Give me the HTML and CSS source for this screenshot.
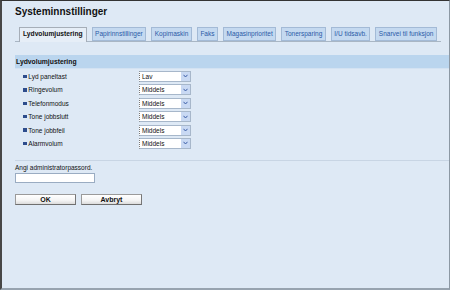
FILE: index.html
```html
<!DOCTYPE html>
<html lang="no">
<head>
<meta charset="UTF-8">
<title>Systeminnstillinger</title>
<link rel="stylesheet" href="styles.css">
</head>
<body>

<div class="page">
    <h1>Systeminnstillinger</h1>

    <div class="tabs">
        <span class="tab active">Lydvolumjustering</span>
        <span class="tab">Papirinnstillinger</span>
        <span class="tab">Kopimaskin</span>
        <span class="tab">Faks</span>
        <span class="tab">Magasinprioritet</span>
        <span class="tab">Tonersparing</span>
        <span class="tab">I/U tidsavb.</span>
        <span class="tab">Snarvei til funksjon</span>
    </div>

    <div class="section-bar">Lydvolumjustering</div>

    <div class="rows">
        <div class="row">
            <span class="label">Lyd paneltast</span>
            <span class="sel"><span class="sel-text">Lav</span><span class="sel-arrow"><svg width="5" height="4" viewBox="0 0 5 4"><path d="M0.5 0.8 L2.5 3 L4.5 0.8" fill="none" stroke="#3d5fa8" stroke-width="1"/></svg></span></span>
        </div>
        <div class="row">
            <span class="label">Ringevolum</span>
            <span class="sel"><span class="sel-text">Middels</span><span class="sel-arrow"><svg width="5" height="4" viewBox="0 0 5 4"><path d="M0.5 0.8 L2.5 3 L4.5 0.8" fill="none" stroke="#3d5fa8" stroke-width="1"/></svg></span></span>
        </div>
        <div class="row">
            <span class="label">Telefonmodus</span>
            <span class="sel"><span class="sel-text">Middels</span><span class="sel-arrow"><svg width="5" height="4" viewBox="0 0 5 4"><path d="M0.5 0.8 L2.5 3 L4.5 0.8" fill="none" stroke="#3d5fa8" stroke-width="1"/></svg></span></span>
        </div>
        <div class="row">
            <span class="label">Tone jobbslutt</span>
            <span class="sel"><span class="sel-text">Middels</span><span class="sel-arrow"><svg width="5" height="4" viewBox="0 0 5 4"><path d="M0.5 0.8 L2.5 3 L4.5 0.8" fill="none" stroke="#3d5fa8" stroke-width="1"/></svg></span></span>
        </div>
        <div class="row">
            <span class="label">Tone jobbfeil</span>
            <span class="sel"><span class="sel-text">Middels</span><span class="sel-arrow"><svg width="5" height="4" viewBox="0 0 5 4"><path d="M0.5 0.8 L2.5 3 L4.5 0.8" fill="none" stroke="#3d5fa8" stroke-width="1"/></svg></span></span>
        </div>
        <div class="row">
            <span class="label">Alarmvolum</span>
            <span class="sel"><span class="sel-text">Middels</span><span class="sel-arrow"><svg width="5" height="4" viewBox="0 0 5 4"><path d="M0.5 0.8 L2.5 3 L4.5 0.8" fill="none" stroke="#3d5fa8" stroke-width="1"/></svg></span></span>
        </div>
    </div>

    <div class="admin">
        <div class="admin-label">Angi administratorpassord.</div>
        <input type="password" class="pw">
        <div class="buttons">
            <button class="btn">OK</button>
            <button class="btn">Avbryt</button>
        </div>
    </div>
</div>

</body>
</html>
```

FILE: styles.css
```css
html, body {
    margin: 0;
    padding: 0;
}
body {
    font-family: 'Liberation Sans', Arial, sans-serif;
    width: 450px;
    height: 290px;
    box-sizing: border-box;
    overflow: hidden;
    background-color: #dee9f5;
    border-top: 1px solid #333;
    border-left: 2px solid #474747;
    border-right: 1px solid #8c98a4;
    border-bottom: 2px solid #97a3af;
    color: #111;
}
.page {
    padding-left: 13px;
}
h1 {
    margin: 4.5px 0 0;
    font-size: 10px;
    line-height: 12px;
    font-weight: bold;
    color: #111;
}
.tabs {
    display: flex;
    gap: 5px;
    margin: 9.5px 8px 0 0;
    padding-left: 4px;
    border-bottom: 1px solid #a9b6c4;
    height: 14px;
}
.tab {
    display: block;
    box-sizing: border-box;
    height: 14px;
    line-height: 12px;
    padding: 0 2.5px;
    font-size: 6.5px;
    color: #2b5aa6;
    background-color: #c4d9f0;
    border: 1px solid #a3bad6;
    white-space: nowrap;
}
.tab.active {
    height: 15px;
    padding: 0 3px;
    font-size: 6.7px;
    font-weight: bold;
    color: #111;
    background-color: #e6eef7;
    border-color: #a6aeb8;
    border-bottom: none;
}
.section-bar {
    margin-top: 13px;
    height: 13px;
    line-height: 13px;
    padding-left: 1px;
    font-size: 6.8px;
    font-weight: bold;
    background-color: #bad5ee;
    border-bottom: 1px solid #d3e2f2;
}
.rows {
    padding-top: 0.8px;
}
.row {
    display: flex;
    align-items: center;
    height: 13.4px;
}
.label {
    display: flex;
    align-items: center;
    width: 124px;
    box-sizing: border-box;
    padding-left: 8px;
    font-size: 6.5px;
}
.label::before {
    content: "";
    width: 3.5px;
    height: 3.5px;
    margin-right: 1.8px;
    background-color: #2d4c8c;
}
.sel {
    position: relative;
    display: block;
    box-sizing: border-box;
    width: 52px;
    height: 11px;
    background-color: #fff;
    border: 1px solid #a7b7ca;
    border-left: 1px dotted #777;
}
.sel-text {
    display: block;
    padding-left: 2px;
    font-size: 6.5px;
    line-height: 9px;
}
.sel-arrow {
    position: absolute;
    top: 0;
    right: 0;
    width: 9px;
    height: 9px;
    display: flex;
    align-items: center;
    justify-content: center;
    background-color: #c9d9f3;
}
.admin {
    margin-top: 9.6px;
    border-top: 1px solid #c8d5e4;
    padding-top: 3px;
}
.admin-label {
    font-size: 6.5px;
    line-height: 8px;
}
.pw {
    display: block;
    box-sizing: border-box;
    width: 80px;
    height: 10px;
    margin: 1px 0 0;
    padding: 0;
    background: #fff;
    border: 1px solid #9aacc2;
}
.buttons {
    display: flex;
    gap: 5px;
    margin-top: 11px;
}
.btn {
    box-sizing: border-box;
    width: 61px;
    height: 11px;
    padding: 0;
    font-family: 'Liberation Sans', Arial, sans-serif;
    font-size: 7px;
    font-weight: bold;
    line-height: 9px;
    color: #111;
    background: linear-gradient(#ffffff, #f4f4f4 60%, #dcdcdc);
    border: 1px solid #9a9a9a;
    border-right-color: #777;
    border-bottom-color: #6f6f6f;
}
```
